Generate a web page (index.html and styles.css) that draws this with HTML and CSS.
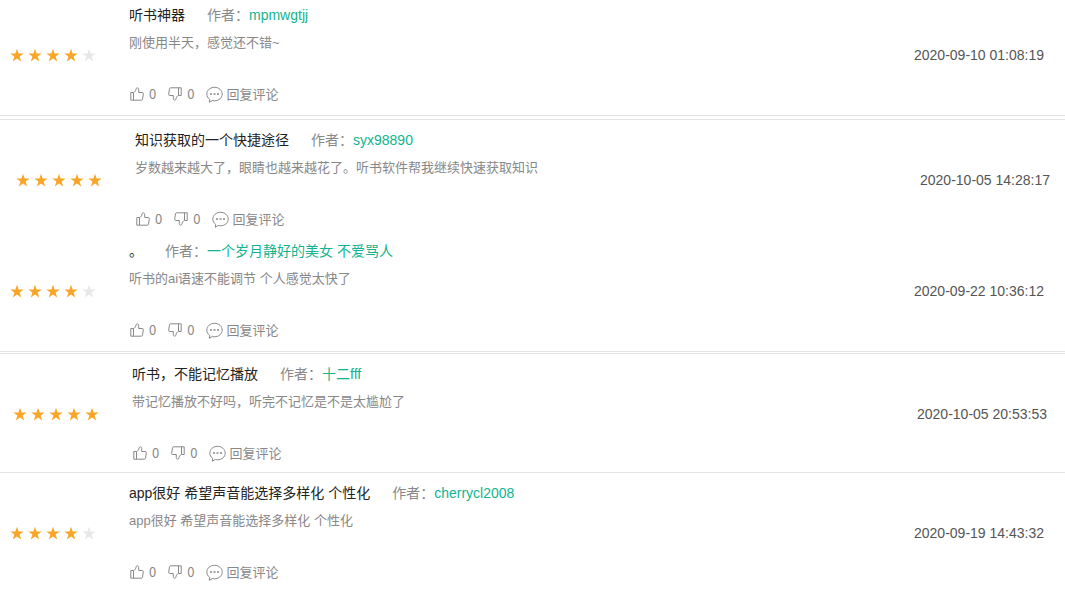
FILE: index.html
```html
<!DOCTYPE html>
<html lang="zh-CN">
  <head>
    <meta charset="utf-8">
    <meta name="viewport" content="width=device-width, initial-scale=1.0">
    <title>用户评论</title>
    <link rel="stylesheet" href="styles.css">
  </head>
  <body>
    <svg class="sprite" aria-hidden="true">
      <symbol id="star" viewBox="0 0 14 14">
        <path d="M7 .8l1.600 4.600h5.100L9.600 8.500l1.600 5L7 10.500l-4.200 3 1.600-5L.3 5.400h5.100z"/>
      </symbol>
      <symbol id="up" viewBox="0 0 14 14">
        <path d="M3.500 5.500H.8v7.700h10.500c.6 0 1-.3 1.200-.9l.8-5.600c.1-.7-.3-1.200-1-1.200H8.700V2.300C8.700.5 6.300.3 6.100 1.900 5.800 3.800 5.200 4.800 3.500 5.500zM3.500 5.500v7.700"/>
      </symbol>
      <symbol id="down" viewBox="0 0 14 14">
        <path d="M10.500 8.500h2.700V.8H2.700c-.6 0-1 .3-1.200.9L.7 7.300c-.1.7.3 1.200 1 1.200h3.600v3.200c0 1.800 2.400 2 2.600.4.3-1.900.9-2.900 2.600-3.600zM10.500 8.500V.8"/>
      </symbol>
      <symbol id="bubble" viewBox="0 0 17 17">
        <path d="M3.700 13.300C1.900 12.100.800 10.200.800 8.100.8 4.300 4.200 1.300 8.500 1.300s7.700 3 7.700 6.800-3.400 6.700-7.700 6.700c-.8 0-1.500-.1-2.200-.3L3.300 16.300z"/>
        <path class="dots" d="M4 7.300h2v1.500H4zM7.500 7.300h2v1.500h-2zM11 7.300h2v1.500h-2z"/>
      </symbol>
    </svg>

    <main>
      <article class="comment line-bottom">
        <div class="stars" role="img" aria-label="4 星">
          <svg><use href="#star"/></svg>
          <svg><use href="#star"/></svg>
          <svg><use href="#star"/></svg>
          <svg><use href="#star"/></svg>
          <svg class="off"><use href="#star"/></svg>
        </div>
        <div class="body">
          <h3><span class="title">听书神器</span>作者：<a href="#">mpmwgtjj</a></h3>
          <p>刚使用半天，感觉还不错~</p>
          <div class="actions">
            <button type="button" aria-label="赞"><svg><use href="#up"/></svg>0</button>
            <button type="button" aria-label="踩"><svg><use href="#down"/></svg>0</button>
            <button type="button" class="reply"><svg><use href="#bubble"/></svg>回复评论</button>
          </div>
        </div>
        <time>2020-09-10 01:08:19</time>
      </article>

      <article class="comment line-top spaced indent-lg">
        <div class="stars" role="img" aria-label="5 星">
          <svg><use href="#star"/></svg>
          <svg><use href="#star"/></svg>
          <svg><use href="#star"/></svg>
          <svg><use href="#star"/></svg>
          <svg><use href="#star"/></svg>
        </div>
        <div class="body">
          <h3><span class="title">知识获取的一个快捷途径</span>作者：<a href="#">syx98890</a></h3>
          <p>岁数越来越大了，眼睛也越来越花了。听书软件帮我继续快速获取知识</p>
          <div class="actions">
            <button type="button" aria-label="赞"><svg><use href="#up"/></svg>0</button>
            <button type="button" aria-label="踩"><svg><use href="#down"/></svg>0</button>
            <button type="button" class="reply"><svg><use href="#bubble"/></svg>回复评论</button>
          </div>
        </div>
        <time>2020-10-05 14:28:17</time>
      </article>

      <article class="comment line-bottom">
        <div class="stars" role="img" aria-label="4 星">
          <svg><use href="#star"/></svg>
          <svg><use href="#star"/></svg>
          <svg><use href="#star"/></svg>
          <svg><use href="#star"/></svg>
          <svg class="off"><use href="#star"/></svg>
        </div>
        <div class="body">
          <h3><span class="title">。</span>作者：<a href="#">一个岁月静好的美女 不爱骂人</a></h3>
          <p>听书的ai语速不能调节 个人感觉太快了</p>
          <div class="actions">
            <button type="button" aria-label="赞"><svg><use href="#up"/></svg>0</button>
            <button type="button" aria-label="踩"><svg><use href="#down"/></svg>0</button>
            <button type="button" class="reply"><svg><use href="#bubble"/></svg>回复评论</button>
          </div>
        </div>
        <time>2020-09-22 10:36:12</time>
      </article>

      <article class="comment line-top line-bottom joined indent-sm">
        <div class="stars" role="img" aria-label="5 星">
          <svg><use href="#star"/></svg>
          <svg><use href="#star"/></svg>
          <svg><use href="#star"/></svg>
          <svg><use href="#star"/></svg>
          <svg><use href="#star"/></svg>
        </div>
        <div class="body">
          <h3><span class="title">听书，不能记忆播放</span>作者：<a href="#">十二fff</a></h3>
          <p>带记忆播放不好吗，听完不记忆是不是太尴尬了</p>
          <div class="actions">
            <button type="button" aria-label="赞"><svg><use href="#up"/></svg>0</button>
            <button type="button" aria-label="踩"><svg><use href="#down"/></svg>0</button>
            <button type="button" class="reply"><svg><use href="#bubble"/></svg>回复评论</button>
          </div>
        </div>
        <time>2020-10-05 20:53:53</time>
      </article>

      <article class="comment last">
        <div class="stars" role="img" aria-label="4 星">
          <svg><use href="#star"/></svg>
          <svg><use href="#star"/></svg>
          <svg><use href="#star"/></svg>
          <svg><use href="#star"/></svg>
          <svg class="off"><use href="#star"/></svg>
        </div>
        <div class="body">
          <h3><span class="title">app很好 希望声音能选择多样化 个性化</span>作者：<a href="#">cherrycl2008</a></h3>
          <p>app很好 希望声音能选择多样化 个性化</p>
          <div class="actions">
            <button type="button" aria-label="赞"><svg><use href="#up"/></svg>0</button>
            <button type="button" aria-label="踩"><svg><use href="#down"/></svg>0</button>
            <button type="button" class="reply"><svg><use href="#bubble"/></svg>回复评论</button>
          </div>
        </div>
        <time>2020-09-19 14:43:32</time>
      </article>
    </main>
  </body>
</html>
```

FILE: styles.css
```css
* {
  box-sizing: border-box;
}
body {
  margin: 0;
  background-color: #fff;
  color: #888;
  font: 14px/20px "Liberation Sans", Arial, "Noto Sans CJK SC", sans-serif;
}
.sprite {
  display: none;
}
.comment {
  display: flex;
  align-items: center;
  padding: 5px 21px 11px 10px;
}
.line-top {
  border-top: 1px solid #e4e4e4;
  padding-top: 10px;
}
.line-bottom {
  border-bottom: 1px solid #e4e4e4;
}
.spaced {
  margin-top: 3px;
  padding-bottom: 7px;
}
.joined {
  margin-top: 1px;
  padding-bottom: 9px;
}
.last {
  padding-top: 10px;
}
.indent-sm {
  padding-left: 13px;
  padding-right: 18px;
}
.indent-lg {
  padding-left: 16px;
  padding-right: 15px;
}
.stars {
  display: flex;
  gap: 4px;
  width: 119px;
}
.stars svg {
  width: 14px;
  height: 14px;
  fill: #f9a527;
}
.stars .off {
  fill: #e8e8e8;
}
.body {
  flex: 1;
}
h3 {
  margin: 0 0 8px;
  font-size: 14px;
  font-weight: normal;
}
.title {
  margin-right: 22px;
  color: #222;
}
a {
  color: #11b48e;
  text-decoration: none;
}
p {
  margin: 0 0 31px;
  font-size: 13px;
}
.actions {
  display: flex;
  gap: 12px;
  padding-left: 1px;
}
button {
  display: flex;
  align-items: center;
  gap: 5px;
  border: 0;
  padding: 0;
  background: none;
  color: inherit;
  font: 13px/20px "Noto Sans CJK SC", sans-serif;
  cursor: pointer;
}
button svg {
  width: 14px;
  height: 14px;
  fill: none;
  stroke: #888;
}
.reply {
  gap: 3px;
}
.reply svg {
  width: 17px;
  height: 17px;
}
.dots {
  fill: #888;
  stroke: none;
}
time {
  color: #555;
}
```
